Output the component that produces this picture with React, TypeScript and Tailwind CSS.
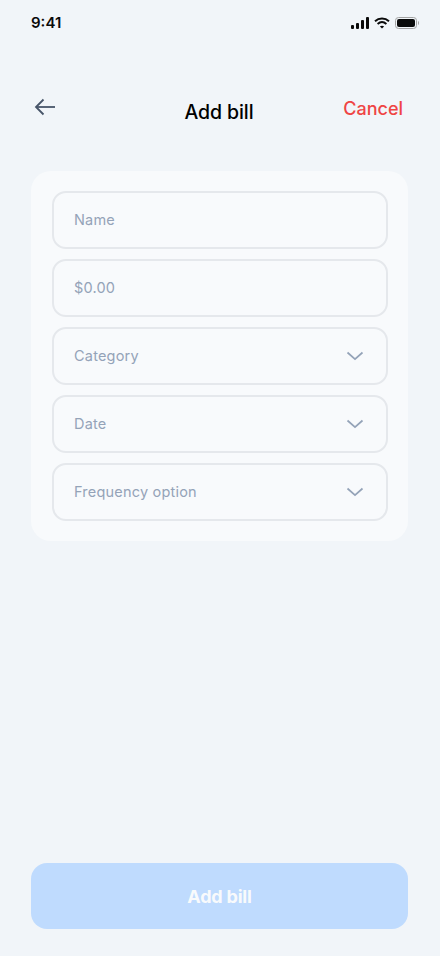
import React from "react";

function Field({ label, chevron }: { label: string; chevron?: boolean }) {
  return (
    <div className="flex h-[58px] items-center justify-between rounded-[14px] border-2 border-[#e5e8ec] pl-[20px] pr-[22px]">
      <span className="mb-[1px] font-['Inter',sans-serif] text-[14.500px] font-normal tracking-[0.2px] text-[#94a3b8]">{label}</span>
      {chevron && (
        <svg width="18" height="10" viewBox="0 0 18 10" fill="none">
          <path d="M1.5 1.5L9 8.2L16.5 1.5" stroke="#94a3b8" strokeWidth="1.7" />
        </svg>
      )}
    </div>
  );
}

export default function App() {
  return (
    <div className="flex h-[956px] w-[440px] flex-col overflow-hidden bg-[#f1f5f9] font-['Inter',sans-serif]">
      <div className="flex h-[46px] items-center justify-between pl-[31px] pr-[21px]">
        <span className="text-[15px] font-semibold text-[#0a0a0a]">9:41</span>
        <div className="flex items-center gap-[5px]">
          <svg width="18" height="12" viewBox="0 0 18 12" fill="#0a0a0a">
            <rect x="0" y="8" width="3" height="4" rx="1" />
            <rect x="5" y="6" width="3" height="6" rx="1" />
            <rect x="10" y="3" width="3" height="9" rx="1" />
            <rect x="15" y="0" width="3" height="12" rx="1" />
          </svg>
          <svg width="16" height="12" viewBox="0 0 16 12" fill="none" stroke="#0a0a0a" strokeWidth="2">
            <path d="M1 4.2C5 .6 11 .6 15 4.2" />
            <path d="M3.6 6.9C6.2 4.7 9.8 4.7 12.4 6.9" />
            <path d="M8 11.5L5.9 9.4C7.1 8.5 8.9 8.5 10.1 9.4Z" fill="#0a0a0a" stroke="none" />
          </svg>
          <svg width="24" height="12" viewBox="0 0 24 12" fill="none">
            <rect x="0.5" y="0.5" width="21" height="11" rx="3" stroke="#a3a3a3" />
            <rect x="2" y="2" width="18" height="8" rx="2" fill="#0a0a0a" />
            <path d="M23 4v4c.6-.3 1-1.100 1-2s-.4-1.700-1-2Z" fill="#a3a3a3" />
          </svg>
        </div>
      </div>

      <div className="mt-[44px] grid h-[36px] grid-cols-[1fr_auto_1fr] grid-rows-[36px] items-center pl-[33px] pr-[37px]">
        <svg width="24" height="20" viewBox="0 0 24 20" fill="none" className="mb-[2px]" stroke="#475569" strokeWidth="1.8">
          <path d="M22 10H3" />
          <path d="M10.500 2.500L3 10L10.500 17.500" />
        </svg>
        <span className="ml-[2px] mt-[9px] text-[19.500px] font-medium tracking-[-0.1px] text-black">Add bill</span>
        <span className="justify-self-end text-[18px] font-medium text-[#ef4444]">Cancel</span>
      </div>

      <div className="mx-[31px] mt-[45px] flex w-[377px] flex-col gap-[10px] rounded-[20px] bg-[#f8fafc] pl-[21px] pr-[20px] py-[20px]">
        <Field label="Name" />
        <Field label="$0.00" />
        <Field label="Category" chevron />
        <Field label="Date" chevron />
        <Field label="Frequency option" chevron />
      </div>

      <div className="mx-[31px] mb-[27px] mt-auto flex h-[66px] w-[377px] items-center justify-center rounded-[16px] bg-[#bfdbfe]">
        <span className="text-[18px] font-bold tracking-[-0.2px] text-[#f8fafc]">Add bill</span>
      </div>
    </div>
  );
}
